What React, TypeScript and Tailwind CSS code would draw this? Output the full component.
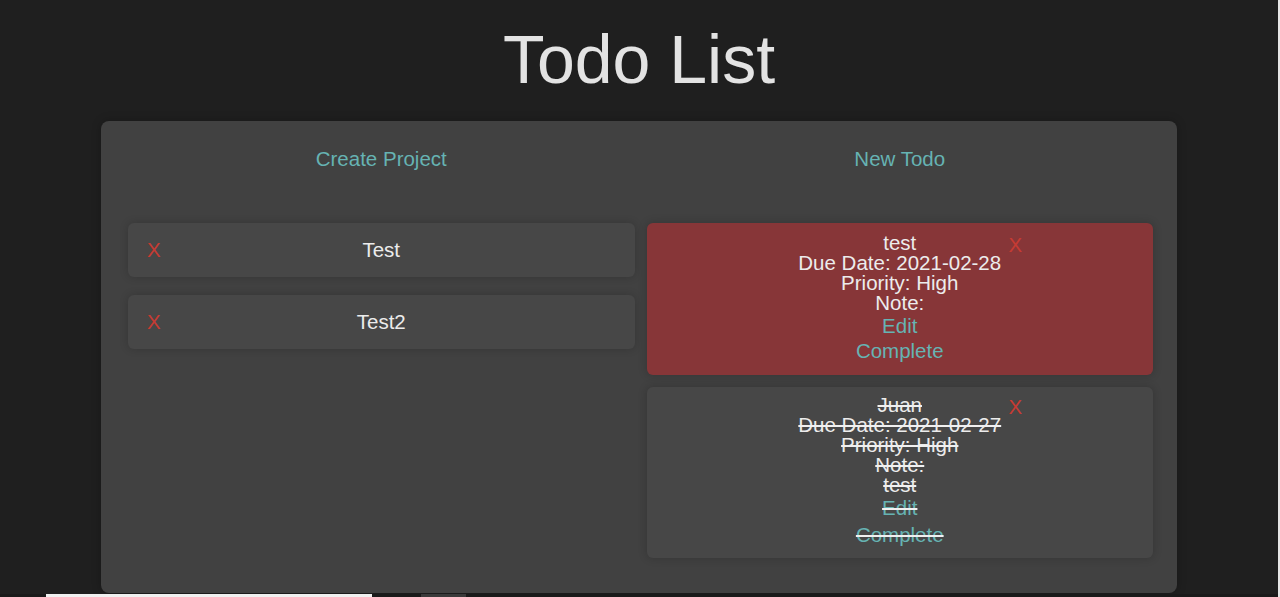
import React from "react";

const font = { fontFamily: '"Liberation Sans", Arial, sans-serif' };

function ProjectCard({ name }: { name: string }) {
  return (
    <div className="relative flex h-[54px] items-center justify-center rounded-md bg-[#474747] shadow-[0_0_8px_rgba(0,0,0,0.18)]">
      <span className="absolute left-[19px] top-1/2 -translate-y-1/2 text-[20.5px] leading-[20px] text-[#c63b33]">X</span>
      <span className="text-[20.5px] leading-[20px] text-[#ececec]">{name}</span>
    </div>
  );
}

function TodoCard({
  lines,
  done,
  red,
}: {
  lines: string[];
  done?: boolean;
  red?: boolean;
}) {
  return (
    <div
      className={`relative flex flex-col items-center rounded-md shadow-[0_0_10px_rgba(0,0,0,0.2)] ${
        red ? "bg-[#873638] pt-[10px] pb-[14px]" : "bg-[#474747] pt-[8px] pb-[13px]"
      } ${done ? "line-through decoration-[#f0f0f0] decoration-[2px]" : ""}`}
    >
      <span
        className="absolute left-[362px] text-[20.5px] leading-[20px] text-[#c63b33]"
        style={{ top: red ? 12 : 10, textDecoration: "none" }}
      >
        X
      </span>
      {lines.map((l, i) => (
        <div key={i} className="h-[20px] text-[20.5px] leading-[20px] text-[#ececec]">
          {l}
        </div>
      ))}
      <div className="flex h-[23px] items-end text-[20.5px] leading-[20px] text-[#66b3b3]">Edit</div>
      <div
        className={`flex items-end text-[20.5px] leading-[20px] text-[#66b3b3] ${red ? "h-[25px]" : "h-[27px]"}`}
      >
        Complete
      </div>
    </div>
  );
}

export default function App() {
  return (
    <div className="flex h-[597px] w-full overflow-hidden bg-[#1f1f1f]" style={font}>
      <div className="flex flex-1 flex-col">
        <h1 className="mt-[26px] text-center text-[68px] font-normal leading-[66px] text-[#e3e3e3]">Todo List</h1>
        <div className="mx-auto mt-[29px] flex h-[472px] w-[1076px] shrink-0 gap-[12px] rounded-lg bg-[#414141] pl-[27px] pr-[24px] pt-[25px] shadow-[0_0_10px_rgba(0,0,0,0.25)]">
          <div className="flex flex-1 flex-col">
            <div className="h-[26px] text-center text-[20.5px] leading-[26px] text-[#66b3b3]">Create Project</div>
            <div className="mt-[51px] flex flex-col gap-[18px]">
              <ProjectCard name="Test" />
              <ProjectCard name="Test2" />
            </div>
          </div>
          <div className="flex flex-1 flex-col">
            <div className="h-[26px] text-center text-[20.5px] leading-[26px] text-[#66b3b3]">New Todo</div>
            <div className="mt-[51px] flex flex-col gap-[12px]">
              <TodoCard red lines={["test", "Due Date: 2021-02-28", "Priority: High", "Note:"]} />
              <TodoCard done lines={["Juan", "Due Date: 2021-02-27", "Priority: High", "Note:", "test"]} />
            </div>
          </div>
        </div>
        <div className="mt-[1px] flex h-[3px] shrink-0 bg-[#1a1a1a]">
          <div className="ml-[46px] w-[326px] bg-[#f0f0f0]" />
          <div className="ml-[49px] w-[45px] bg-[#3a3a3a]" />
        </div>
      </div>
      <div className="w-[2px] bg-[#e6e6e6]" />
    </div>
  );
}
